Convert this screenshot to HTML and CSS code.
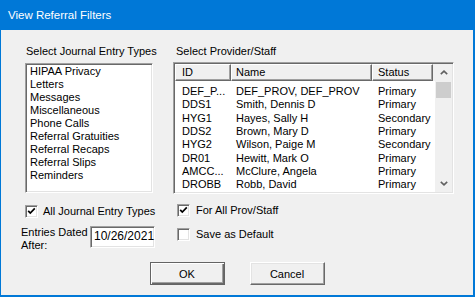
FILE: index.html
```html
<!DOCTYPE html>
<html lang="en">
<head>
    <meta charset="UTF-8">
    <title>View Referral Filters</title>
    <link rel="stylesheet" href="styles.css">
</head>
<body>
<div class="dialog">
    <div class="titlebar">View Referral Filters</div>
    <div class="content">
        <div class="columns">
            <div class="col-left">
                <div class="label">Select Journal Entry Types</div>
                <div class="listbox">
                    <div>HIPAA Privacy</div>
                    <div>Letters</div>
                    <div>Messages</div>
                    <div>Miscellaneous</div>
                    <div>Phone Calls</div>
                    <div>Referral Gratuities</div>
                    <div>Referral Recaps</div>
                    <div>Referral Slips</div>
                    <div>Reminders</div>
                </div>
                <div class="check-row">
                    <span class="checkbox"><svg width="9" height="9" viewBox="0 0 9 9"><polyline points="1.2,3.8 3.3,6 7.8,1.4" fill="none" stroke="#000" stroke-width="1.7"/></svg></span>
                    All Journal Entry Types
                </div>
                <div class="date-row">
                    <div class="date-label">Entries Dated<br>After:</div>
                    <div class="date-input">10/26/2021</div>
                </div>
            </div>
            <div class="col-right">
                <div class="label">Select Provider/Staff</div>
                <div class="listview">
                    <div class="lv-main">
                        <div class="lv-header">
                            <div class="hd-id">ID</div>
                            <div class="hd-name">Name</div>
                            <div class="hd-status">Status</div>
                        </div>
                        <div class="lv-rows">
                            <div class="lv-row"><span>DEF_P...</span><span>DEF_PROV, DEF_PROV</span><span>Primary</span></div>
                            <div class="lv-row"><span>DDS1</span><span>Smith, Dennis D</span><span>Primary</span></div>
                            <div class="lv-row"><span>HYG1</span><span>Hayes, Sally H</span><span>Secondary</span></div>
                            <div class="lv-row"><span>DDS2</span><span>Brown, Mary D</span><span>Primary</span></div>
                            <div class="lv-row"><span>HYG2</span><span>Wilson, Paige M</span><span>Secondary</span></div>
                            <div class="lv-row"><span>DR01</span><span>Hewitt, Mark O</span><span>Primary</span></div>
                            <div class="lv-row"><span>AMCC...</span><span>McClure, Angela</span><span>Primary</span></div>
                            <div class="lv-row"><span>DROBB</span><span>Robb, David</span><span>Primary</span></div>
                        </div>
                    </div>
                    <div class="scrollbar">
                        <div class="sb-arrow"><svg width="8" height="5" viewBox="0 0 8 5"><polyline points="0.8,4.2 4,1.2 7.2,4.2" fill="none" stroke="#606060" stroke-width="1.6"/></svg></div>
                        <div class="sb-thumb"></div>
                        <div class="sb-track"></div>
                        <div class="sb-arrow"><svg width="8" height="5" viewBox="0 0 8 5"><polyline points="0.8,0.8 4,3.8 7.2,0.8" fill="none" stroke="#606060" stroke-width="1.6"/></svg></div>
                    </div>
                </div>
                <div class="check-row">
                    <span class="checkbox"><svg width="9" height="9" viewBox="0 0 9 9"><polyline points="1.2,3.8 3.3,6 7.8,1.4" fill="none" stroke="#000" stroke-width="1.7"/></svg></span>
                    For All Prov/Staff
                </div>
                <div class="check-row save-row">
                    <span class="checkbox"></span>
                    Save as Default
                </div>
            </div>
        </div>
        <div class="buttons">
            <button class="btn default">OK</button>
            <button class="btn">Cancel</button>
        </div>
    </div>
</div>
</body>
</html>
```

FILE: styles.css
```css
body {
    margin: 0;
    font-family: "Liberation Sans", Arial, sans-serif;
    font-size: 11px;
    color: #000;
}
.dialog {
    width: 475px;
    height: 297px;
    box-sizing: border-box;
    border: solid #0078d7;
    border-width: 0 2px 2px 1px;
    background-color: #f0f0f0;
}
.titlebar {
    height: 30px;
    line-height: 30px;
    padding-left: 8px;
    margin-left: -1px;
    background-color: #0078d7;
    color: white;
    font-size: 11.5px;
}
.content {
    padding-top: 15px;
}
.columns {
    display: flex;
    gap: 20px;
    padding-left: 24px;
}
.col-left { width: 128px; }
.col-right { width: 281px; }
.label {
    line-height: 13px;
    padding-left: 1px;
    white-space: nowrap;
}
.col-right .label { padding-left: 3px; }

/* sunken 3d frames */
.listbox, .listview, .date-input {
    box-sizing: border-box;
    border: 1px solid;
    border-color: #a0a0a0 #fff #fff #a0a0a0;
    box-shadow: inset 1px 1px #696969, inset -1px -1px #e3e3e3;
    background-color: white;
}
.listbox {
    margin-top: 5px;
    height: 130px;
    padding: 1px 4px;
    line-height: 13px;
    white-space: nowrap;
}
.check-row {
    display: flex;
    align-items: center;
    gap: 5px;
    height: 13px;
    line-height: 13px;
    margin-top: 12px;
    white-space: nowrap;
}
.checkbox {
    flex-shrink: 0;
    width: 13px;
    height: 13px;
    box-sizing: border-box;
    border: 1px solid;
    border-color: #a0a0a0 #fff #fff #a0a0a0;
    box-shadow: inset 1px 1px #696969, inset -1px -1px #e3e3e3;
    background-color: white;
    display: flex;
    align-items: center;
    justify-content: center;
}
.col-right .check-row {
    margin-top: 10px;
    margin-left: 4px;
    gap: 6px;
}
.col-right .save-row { margin-top: 11px; }
.date-row {
    display: flex;
    margin-top: 8px;
    margin-left: -4px;
}
.date-label {
    width: 68px;
    flex-shrink: 0;
    line-height: 13px;
    white-space: nowrap;
}
.date-input {
    flex-shrink: 0;
    width: 65px;
    height: 22px;
    margin-left: 1px;
    padding: 1px 3px;
    font-size: 12px;
    line-height: 16px;
}

/* provider list view */
.listview {
    margin-top: 4px;
    height: 132px;
    display: flex;
    padding: 1px;
    overflow: hidden;
}
.lv-main {
    flex-grow: 1;
    overflow: hidden;
}
.lv-header {
    display: flex;
    height: 17px;
    background-color: #f0f0f0;
}
.lv-header div {
    box-sizing: border-box;
    border: 1px solid;
    border-color: #fff #696969 #696969 #fff;
    box-shadow: inset -1px -1px #a0a0a0;
    line-height: 15px;
}
.hd-id { width: 56px; padding-left: 6px; }
.hd-name { width: 141px; padding-left: 4px; }
.hd-status { width: 61px; padding-left: 5px; }
.lv-rows { padding-top: 4px; }
.lv-row {
    display: grid;
    grid-template-columns: 54px 142px auto;
    padding-left: 7px;
    line-height: 13.33px;
    white-space: nowrap;
}
.scrollbar {
    width: 17px;
    display: flex;
    flex-direction: column;
    background-color: #f0f0f0;
}
.sb-arrow {
    height: 17px;
    display: flex;
    align-items: center;
    justify-content: center;
}
.sb-thumb {
    height: 16px;
    margin: 1px 1px 0 1px;
    background-color: #cdcdcd;
}
.sb-track { flex-grow: 1; }

.buttons {
    display: flex;
    justify-content: center;
    gap: 25px;
    margin-top: 10px;
}
.btn {
    width: 75px;
    height: 23px;
    box-sizing: border-box;
    padding: 0;
    font-family: "Liberation Sans", Arial, sans-serif;
    font-size: 11px;
    color: #000;
    background-color: #f0f0f0;
    border: 1px solid;
    border-color: #fff #696969 #696969 #fff;
    box-shadow: inset -1px -1px #a0a0a0, inset 1px 1px #e3e3e3;
}
.btn.default {
    border-color: #646464;
    box-shadow: inset 1px 1px #fff, inset -1px -1px #696969, inset -2px -2px #a0a0a0;
}
```
